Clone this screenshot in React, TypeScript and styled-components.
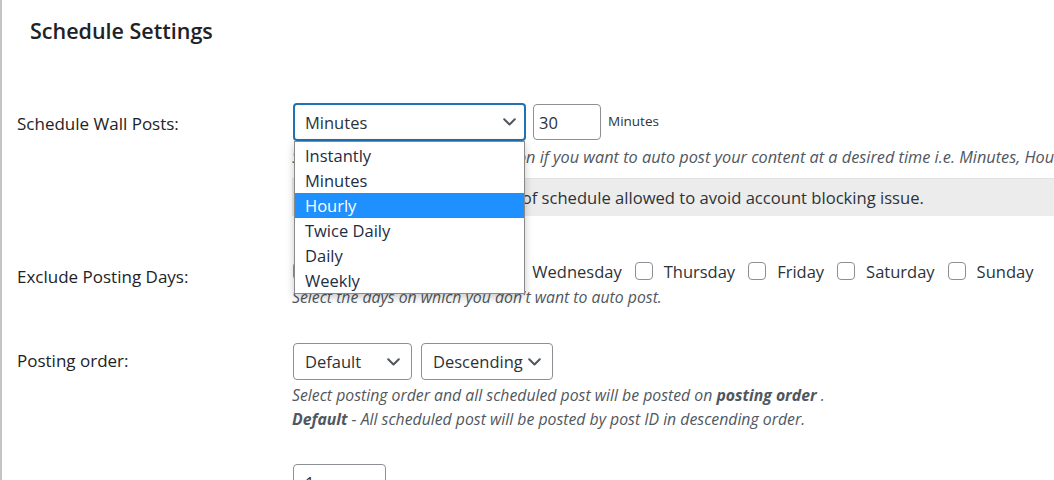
import React from 'react';
import styled, {createGlobalStyle} from 'styled-components';

const GlobalStyle = createGlobalStyle`
    html, body {
        margin: 0;
        padding: 0;
        background: #ffffff;
    }
    body {
        font-family: "Open Sans", "Noto Sans", sans-serif;
        color: #1d2327;
    }
`

const Page = styled.div`
    height: 480px;
    overflow: hidden;
    border-left: 2px solid #c3c4c7;
    box-sizing: border-box;
`

const Title = styled.h2`
    margin: 0;
    padding: 17px 0 0 28px;
    font-size: 21.5px;
    font-weight: 600;
    line-height: 28px;
    color: #1d2327;
`

const Form = styled.div`
    margin-top: 58px;
`

const Row = styled.div<{ gap: number }>`
    display: grid;
    grid-template-columns: 276px 1fr;
    padding-left: 15px;
    margin-bottom: ${({gap}) => gap}px;
`

const Label = styled.div<{ lh: number; top: number }>`
    font-size: 17px;
    font-weight: 500;
    line-height: ${({lh}) => lh}px;
    padding-top: ${({top}) => top}px;
    white-space: nowrap;
`

const Field = styled.div`
    min-width: 0;
`

const Controls = styled.div<{ gap: number }>`
    display: flex;
    align-items: center;
    gap: ${({gap}) => gap}px;
`

const SelectWrap = styled.div`
    position: relative;
`

const SelectBox = styled.div<{ width: number; focused?: boolean }>`
    box-sizing: border-box;
    width: ${({width}) => width}px;
    height: ${({focused}) => focused ? 38 : 37}px;
    border: ${({focused}) => focused ? '2px solid #2271b1' : '1px solid #8c8f94'};
    border-radius: 4px;
    display: flex;
    align-items: center;
    justify-content: space-between;
    padding: 0 ${({focused}) => focused ? 8 : 11}px 0 ${({focused}) => focused ? 10 : 11}px;
    font-size: 16.5px;
    color: #2c3338;
    background: #fff;
`

const Chevron = () => (
    <svg width="13" height="8" viewBox="0 0 13 8">
        <path d="M1.2 1.2 L6.5 6.5 L11.8 1.2" fill="none" stroke="#50575e" strokeWidth="2" strokeLinecap="round" strokeLinejoin="round"/>
    </svg>
)

const Dropdown = styled.ul`
    position: absolute;
    top: 100%;
    left: 1px;
    width: 231px;
    box-sizing: border-box;
    margin: 0;
    padding: 1px 0 0;
    list-style: none;
    background: #fff;
    border: 1px solid #8a8a8a;
    box-shadow: 0 3px 8px rgba(0, 0, 0, 0.22);
    z-index: 10;
`

const Option = styled.li<{ active?: boolean }>`
    height: 25px;
    line-height: 25px;
    padding-left: 10px;
    font-size: 16.5px;
    background: ${({active}) => active ? '#1e90ff' : 'transparent'};
    color: ${({active}) => active ? '#ffffff' : '#1d2d44'};
`

const TextInput = styled.div<{ width: number; pad: number }>`
    box-sizing: border-box;
    width: ${({width}) => width}px;
    height: 36px;
    border: 1px solid #8c8f94;
    border-radius: 4px;
    padding-left: ${({pad}) => pad}px;
    display: flex;
    align-items: center;
    font-size: 16.5px;
    color: #2c3338;
    background: #fff;
`

const Unit = styled.span`
    font-size: 13.5px;
    color: #2c3338;
    margin-top: -2px;
`

const Description = styled.p<{ top: number; lh: number; size?: number }>`
    margin: ${({top}) => top}px 0 0 -1px;
    font-size: ${({size}) => size ?? 15.8}px;
    font-style: italic;
    line-height: ${({lh}) => lh}px;
    color: #50575e;
    white-space: nowrap;
    overflow: hidden;
    b {
        font-weight: 700;
    }
`

const Notice = styled.div`
    margin: 10px 0 0 -1px;
    height: 38px;
    line-height: 37px;
    background: #ececec;
    border-top: 1px solid #e2e2e2;
    box-sizing: border-box;
    padding-left: 14px;
    font-size: 16.6px;
    color: #2c3338;
    white-space: nowrap;
    overflow: hidden;
`

const Days = styled.div`
    display: flex;
    align-items: center;
    height: 26px;
    gap: 13px;
`

const Day = styled.label`
    display: flex;
    align-items: center;
    gap: 11px;
    font-size: 16.5px;
    color: #2c3338;
    white-space: nowrap;
`

const Box = styled.span`
    flex: none;
    width: 18px;
    height: 18px;
    box-sizing: border-box;
    border: 1px solid #8c8f94;
    border-radius: 4px;
    background: #fff;
`

const options = ['Instantly', 'Minutes', 'Hourly', 'Twice Daily', 'Daily', 'Weekly'];
const days = ['Monday', 'Tuesday', 'Wednesday', 'Thursday', 'Friday', 'Saturday', 'Sunday'];

export default function App() {
    return (
        <Page>
            <GlobalStyle/>
            <Title>Schedule Settings</Title>
            <Form>
                <Row gap={42}>
                    <Label lh={37} top={2}>Schedule Wall Posts:</Label>
                    <Field>
                        <Controls gap={7}>
                            <SelectWrap>
                                <SelectBox width={233} focused>
                                    <span>Minutes</span>
                                    <Chevron/>
                                </SelectBox>
                                <Dropdown>
                                    {options.map((o) => (
                                        <Option key={o} active={o === 'Hourly'}>{o}</Option>
                                    ))}
                                </Dropdown>
                            </SelectWrap>
                            <TextInput width={68} pad={5}>30</TextInput>
                            <Unit>Minutes</Unit>
                        </Controls>
                        <Description top={5} lh={22} size={16.3}>
                            Select the schedule posting option if you want to auto post your content at a desired time i.e. Minutes, Hourly, Twice Daily, Daily, Weekly.
                        </Description>
                        <Notice>Note: Minimum 30 minutes of schedule allowed to avoid account blocking issue.</Notice>
                    </Field>
                </Row>
                <Row gap={35}>
                    <Label lh={26} top={6}>Exclude Posting Days:</Label>
                    <Field>
                        <Days>
                            {days.map((d) => (
                                <Day key={d}><Box/>{d}</Day>
                            ))}
                        </Days>
                        <Description top={2} lh={22}>Select the days on which you don't want to auto post.</Description>
                    </Field>
                </Row>
                <Row gap={33}>
                    <Label lh={36} top={0}>Posting order:</Label>
                    <Field>
                        <Controls gap={9}>
                            <SelectBox width={119}>
                                <span>Default</span>
                                <Chevron/>
                            </SelectBox>
                            <SelectBox width={132}>
                                <span>Descending</span>
                                <Chevron/>
                            </SelectBox>
                        </Controls>
                        <Description top={3} lh={24}>
                            Select posting order and all scheduled post will be posted on <b>posting order</b> .
                        </Description>
                        <Description top={0} lh={24}>
                            <b>Default</b> - All scheduled post will be posted by post ID in descending order.
                        </Description>
                    </Field>
                </Row>
                <Row gap={0}>
                    <Label lh={36} top={4}>Maximum Posting:</Label>
                    <Field>
                        <TextInput width={93} pad={11}>1</TextInput>
                    </Field>
                </Row>
            </Form>
        </Page>
    );
}
